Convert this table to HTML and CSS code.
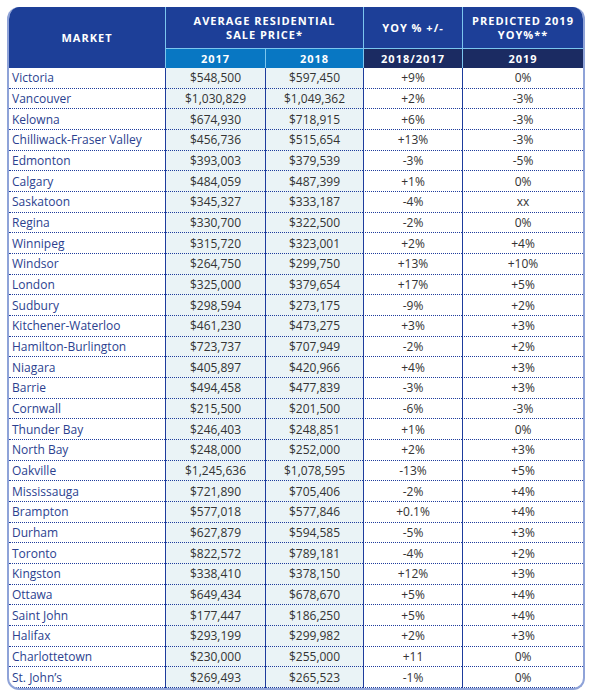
FILE: index.html
```html
<!DOCTYPE html>
<html>
<head>
<meta charset="utf-8">
<link rel="stylesheet" href="styles.css">
</head>
<body>
<div class="wrap">
<table class="grid">
<colgroup>
<col class="w-market">
<col class="w-2017">
<col class="w-2018">
<col class="w-yoy">
<col class="w-pred">
</colgroup>
<thead>
<tr class="h1">
<th rowspan="2" class="c-market">MARKET</th>
<th colspan="2" class="sep">AVERAGE RESIDENTIAL<br>SALE PRICE*</th>
<th class="sep">YOY % +/-</th>
<th class="sep">PREDICTED 2019<br>YOY%**</th>
</tr>
<tr class="h2">
<th class="bright sep">2017</th>
<th class="bright sep">2018</th>
<th class="navy sep">2018/2017</th>
<th class="navy sep">2019</th>
</tr>
</thead>
<tbody id="rows"></tbody>
</table>
</div>
<script>
const data = [
["Victoria","$548,500","$597,450","+9%","0%"],
["Vancouver","$1,030,829","$1,049,362","+2%","-3%"],
["Kelowna","$674,930","$718,915","+6%","-3%"],
["Chilliwack-Fraser Valley","$456,736","$515,654","+13%","-3%"],
["Edmonton","$393,003","$379,539","-3%","-5%"],
["Calgary","$484,059","$487,399","+1%","0%"],
["Saskatoon","$345,327","$333,187","-4%","xx"],
["Regina","$330,700","$322,500","-2%","0%"],
["Winnipeg","$315,720","$323,001","+2%","+4%"],
["Windsor","$264,750","$299,750","+13%","+10%"],
["London","$325,000","$379,654","+17%","+5%"],
["Sudbury","$298,594","$273,175","-9%","+2%"],
["Kitchener-Waterloo","$461,230","$473,275","+3%","+3%"],
["Hamilton-Burlington","$723,737","$707,949","-2%","+2%"],
["Niagara","$405,897","$420,966","+4%","+3%"],
["Barrie","$494,458","$477,839","-3%","+3%"],
["Cornwall","$215,500","$201,500","-6%","-3%"],
["Thunder Bay","$246,403","$248,851","+1%","0%"],
["North Bay","$248,000","$252,000","+2%","+3%"],
["Oakville","$1,245,636","$1,078,595","-13%","+5%"],
["Mississauga","$721,890","$705,406","-2%","+4%"],
["Brampton","$577,018","$577,846","+0.1%","+4%"],
["Durham","$627,879","$594,585","-5%","+3%"],
["Toronto","$822,572","$789,181","-4%","+2%"],
["Kingston","$338,410","$378,150","+12%","+3%"],
["Ottawa","$649,434","$678,670","+5%","+4%"],
["Saint John","$177,447","$186,250","+5%","+4%"],
["Halifax","$293,199","$299,982","+2%","+3%"],
["Charlottetown","$230,000","$255,000","+11","0%"],
["St. John’s","$269,493","$265,523","-1%","0%"]
];
const tb = document.getElementById("rows");
data.forEach((r) => {
  const tr = document.createElement("tr");
  tr.innerHTML =
    '<td class="name">' + r[0] + '</td>' +
    '<td class="num tint">' + r[1] + '</td>' +
    '<td class="num tint">' + r[2] + '</td>' +
    '<td class="num">' + r[3] + '</td>' +
    '<td class="num">' + r[4] + '</td>';
  tb.appendChild(tr);
});
</script>
</body>
</html>
```
FILE: styles.css
```css
html, body {
  margin: 0;
  padding: 0;
  background: #ffffff;
}
body {
  padding: 7px 0 0 7px;
  font-family: "Open Sans", "Noto Sans", sans-serif;
}
.wrap {
  width: 578px;
  border: 2px solid #8fa3d8;
  border-top: none;
  border-radius: 12px;
  overflow: hidden;
  box-sizing: border-box;
  background: #fff;
}
.grid {
  width: 574px;
  border-collapse: separate;
  border-spacing: 0;
  table-layout: fixed;
}
.w-market { width: 156px; }
.w-2017 { width: 100px; }
.w-2018 { width: 98px; }
.w-yoy { width: 99px; }
.w-pred { width: 121px; }
.grid th {
  color: #ffffff;
  font-weight: 700;
  font-size: 11px;
  letter-spacing: 1px;
  text-align: center;
  padding: 0;
  line-height: 14px;
}
.h1 th {
  background: #1d3f98;
  height: 41px;
  border-bottom: 1px solid #7cc6ee;
}
.h1 th.c-market {
  border-bottom: none;
}
.sep {
  border-left: 1px solid #7cc6ee;
}
.h2 th {
  height: 19px;
  line-height: 19px;
}
.h2 th.bright {
  background: #0877c3;
}
.h2 th.navy {
  background: #1b2b62;
}
.grid tbody td {
  height: 19.68px;
  padding: 0;
  font-size: 12px;
  border-bottom: 1px dotted #1e3c9c;
  border-left: 1px solid #1e3c9c;
  color: #333333;
  text-align: center;
  line-height: 19px;
  white-space: nowrap;
  box-sizing: content-box;
}
.grid tbody td.name {
  border-left: none;
  text-align: left;
  padding-left: 3px;
  font-size: 12px;
  color: #2b3f8f;
}
.grid tbody td.tint {
  background: #eaf3f6;
}
```
